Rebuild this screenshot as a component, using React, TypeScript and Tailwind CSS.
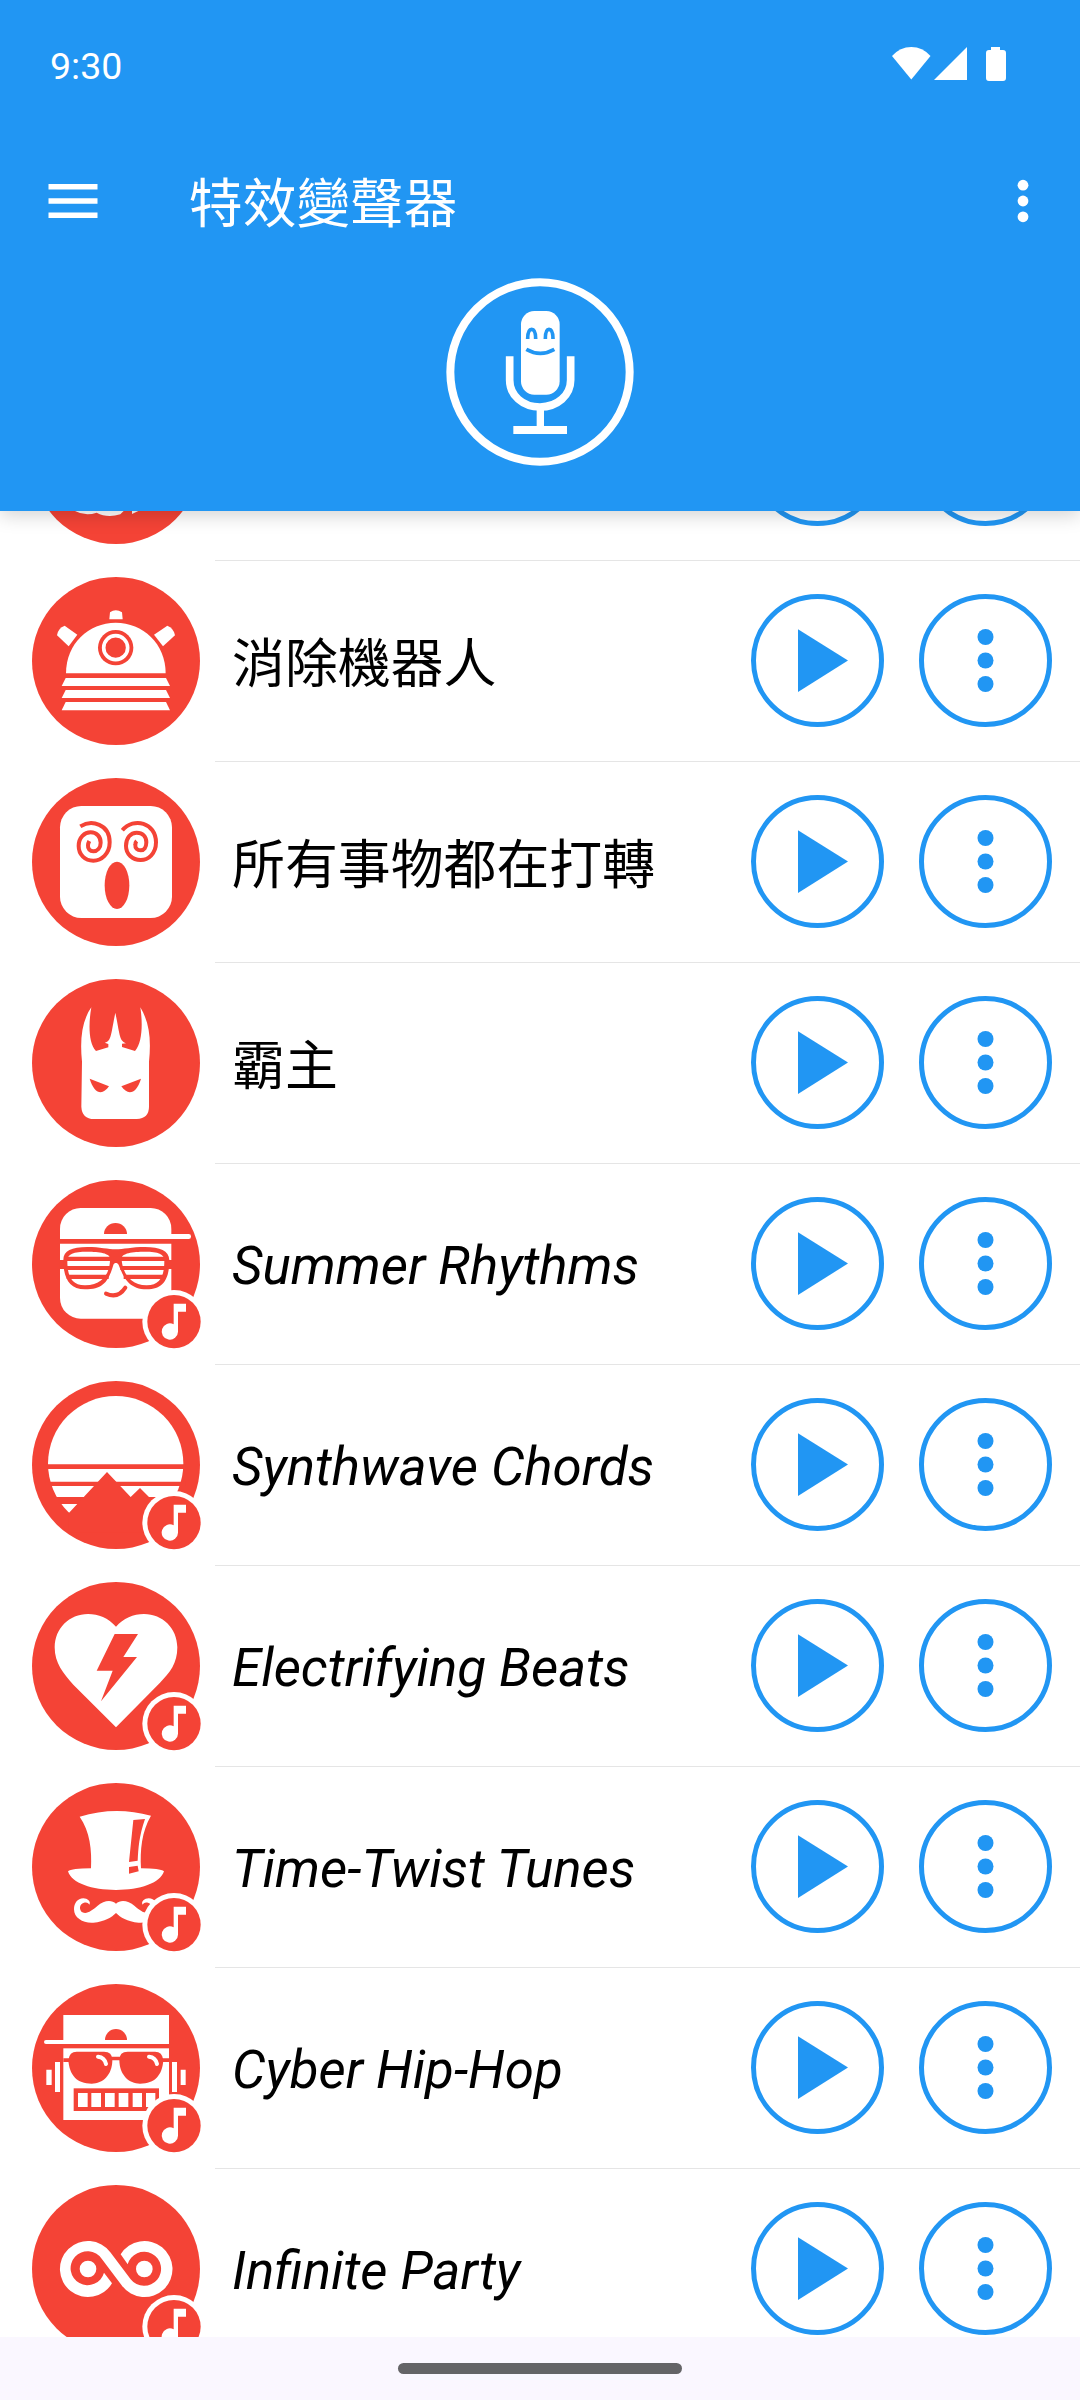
import type { ReactNode } from "react";

const RED = "#f44336";

type Effect = {
  id: string;
  label: string;
  art: ReactNode;
  music?: boolean;
};

// All effect drawings share a 504 x 504 canvas, the size of the red disc.
const effects: Effect[] = [
  {
    id: "cloud",
    label: "",
    art: (
      <>
        <path d="M129 405Q160 422 194 410Q225 427 265 415L276 404V300H129Z" />
        <path d="M300 403V414L323 403Z" />
      </>
    ),
  },
  {
    id: "exterminator",
    label: "消除機器人",
    art: (
      <>
        <path d="M232 127L234 106Q251 94 270 106L272 127Z" />
        <path d="M136 173L110 208L75 175Q78 153 98 146Z" />
        <path d="M366 173L393 208L429 175Q425 153 406 146Z" />
        <path d="M102 289C102 200 170 137 251 137C333 137 401 200 401 289Z" />
        <circle cx="251" cy="212" r="53" fill={RED} />
        <circle cx="251" cy="212" r="36" fill="none" stroke="#fff" strokeWidth="11" />
        <path d="M101 303H402L414 327H89Z" />
        <path d="M101 339H402L414 363H89Z" />
        <path d="M101 375H402L414 400H89Z" />
      </>
    ),
  },
  {
    id: "spinning",
    label: "所有事物都在打轉",
    art: (
      <>
        <rect x="84" y="84" width="336" height="336" rx="64" />
        <ellipse cx="255" cy="322" rx="37" ry="71" fill={RED} />
        <g fill="none" stroke={RED} strokeWidth="12">
          <path d="M145 145C179 124 233 138 233 193C233 228 208 248 184 248C159 248 140 230 140 204C140 178 158 163 176 163C194 163 206 176 206 194C206 210 196 220 184 220C174 220 167 212 168 202C168 196 170 193 172 189" />
          <path d="M271 157C305 116 372 134 372 193C372 228 348 246 326 246C301 246 282 228 282 204C282 180 296 164 314 164C332 164 343 176 343 193C343 208 336 217 326 217C316 217 309 210 310 201C310 196 311 192 314 189" />
        </g>
      </>
    ),
  },
  {
    id: "overlord",
    label: "霸主",
    art: (
      <>
        <path d="M178 85C150 125 143 180 150 248L148 383Q150 420 186 420H314Q351 418 351 383V248C358 180 352 130 325 85C332 130 332 190 309 216L270 204V194L282 193C262 185 264 170 250 101C236 170 238 187 218 191L229 195V205L192 216C168 190 170 130 178 85Z" />
        <path d="M173 299L231 322C212 350 187 346 173 299Z" fill={RED} />
        <path d="M327 299L268 322C287 350 313 346 327 299Z" fill={RED} />
      </>
    ),
  },
  {
    id: "summer",
    label: "Summer Rhythms",
    music: true,
    art: (
      <>
        <rect x="84" y="84" width="334" height="332" rx="62" />
        <rect x="300" y="162" width="177" height="15" rx="7" />
        <path d="M84 177H424V191H84Z" fill={RED} />
        <path d="M216 162A34.5 33 0 0 1 285 162Z" fill={RED} />
        <path d="M82 240H98V267H82ZM408 240H420V267H408Z" fill={RED} />
        <path d="M94 240C94 212 119 201 166 201C204 201 229 208 251 208C274 208 299 201 339 201C384 201 411 212 412 240C412 290 399 328 344 328C289 328 274 290 260 255C256 247 247 247 244 255C229 305 214 328 159 328C109 328 94 290 94 240Z" fill={RED} />
        <path d="M106 242C106 222 124 215 166 215C204 215 239 220 234 240C234 270 219 315 159 316C114 316 106 280 106 242Z" />
        <path d="M397 242C397 222 379 215 339 215C299 215 264 220 269 240C271 270 289 315 344 316C389 316 397 280 397 242Z" />
        <path d="M100 230H404V243H100ZM100 258H237V270H100ZM265 258H404V270H265ZM104 284H230V297H104ZM275 284H400V297H275Z" fill={RED} />
        <path d="M222 341C242 350 264 348 280 323" fill="none" stroke={RED} strokeWidth="12" strokeLinecap="round" />
      </>
    ),
  },
  {
    id: "synthwave",
    label: "Synthwave Chords",
    music: true,
    art: (
      <>
        <circle cx="251" cy="248" r="203" />
        <path d="M40 250H460V264H40ZM40 302H460V315H40ZM40 348H460V369H40Z" fill={RED} />
        <path d="M110 397L225 273L296 348L324 321L363 360L380 369H430V455H110Z" fill={RED} />
      </>
    ),
  },
  {
    id: "electrifying",
    label: "Electrifying Beats",
    music: true,
    art: (
      <>
        <path d="M252 134C229 108 199 96 168 96C112 96 68 139 68 196C68 244 94 274 124 308L252 436L384 302C414 272 436 244 436 196C436 139 392 96 336 96C304 96 274 109 252 134Z" />
        <path d="M248 156H318L274 225H315L207 358L242 266H194Z" fill={RED} />
      </>
    ),
  },
  {
    id: "time-twist",
    label: "Time-Twist Tunes",
    music: true,
    art: (
      <>
        <path d="M143 101Q249 68 357 98C329 146 324 201 327 256Q384 256 396 265C384 301 324 321 252 321C180 321 119 301 108 265Q119 256 177 256C180 201 174 146 143 101Z" />
        <path d="M304 111L339 108C321 160 319 195 317 233L291 237Z" fill={RED} />
        <path d="M291 252L317 248L320 265L291 272Z" fill={RED} />
        <path d="M252 362C239 349 216 351 196 369C179 383 166 394 151 388C141 381 141 363 156 359C166 357 170 361 172 365C178 356 166 346 154 346C136 346 126 361 126 379C126 406 154 421 184 419C219 416 239 403 252 390C265 403 285 416 320 419C350 421 378 406 378 379C378 361 368 346 350 346C338 346 326 356 332 365C334 361 338 357 348 359C363 363 363 381 353 388C338 394 325 383 308 369C288 351 265 349 252 362Z" />
      </>
    ),
  },
  {
    id: "cyber",
    label: "Cyber Hip-Hop",
    music: true,
    art: (
      <>
        <rect x="94" y="93" width="317" height="87" />
        <rect x="36" y="168" width="100" height="12" rx="6" />
        <path d="M219 168A33 33 0 0 1 285 168Z" fill={RED} />
        <rect x="94" y="193" width="317" height="215" />
        <path d="M94 223H116V234H94ZM385 223H411V234H385ZM232 218H272V229H232Z" fill={RED} />
        <path d="M109 228Q112 203 134 203H216Q241 203 241 228C241 273 212 299 179 299C134 299 112 273 109 228Z" fill={RED} />
        <path d="M262 228Q262 203 287 203H369Q391 203 394 228C391 273 369 299 324 299C291 299 262 273 262 228Z" fill={RED} />
        <path d="M198 218Q218 220 222 240M351 218Q371 220 375 240" fill="none" stroke="#fff" strokeWidth="12" strokeLinecap="round" />
        <path d="M43 257H59V303H43ZM69 234H84V324H69ZM420 234H435V324H420ZM446 257H461V303H446Z" />
        <rect x="125" y="313" width="256" height="68" fill={RED} />
        <path d="M138 327H167V369H138ZM178 327H207V369H178ZM219 327H248V369H219ZM260 327H289V369H260ZM302 327H330V369H302ZM342 327H370V369H342Z" />
      </>
    ),
  },
  {
    id: "infinite",
    label: "Infinite Party",
    music: true,
    art: (
      <>
        <path d="M240 295A84 84 0 1 1 235 201.6L296 282.6A51 51 0 1 0 287 238L266 208A84 84 0 1 1 270 302L209 221A51 51 0 1 0 216 263Z" />
        <circle cx="168" cy="252" r="25" />
        <circle cx="337" cy="252" r="25" />
      </>
    ),
  },
];

function MusicBadge() {
  return (
    <>
      <circle cx="426" cy="425" r="95" />
      <circle cx="426" cy="425" r="80" fill={RED} />
      <path d="M425 371H462V395H438V455A24.5 24.5 0 1 1 425 433Z" />
    </>
  );
}

function EffectRow({ label, art, music }: Effect) {
  return (
    <li className="flex h-[201px] shrink-0 pl-8">
      <svg viewBox="0 0 504 504" fill="#fff" className="mt-4 size-[168px] shrink-0 overflow-visible">
        <circle cx="252" cy="252" r="252" fill={RED} />
        {art}
        {music ? <MusicBadge /> : null}
      </svg>
      <div className="ml-[15px] flex flex-1 items-center border-b border-[#e5e5e5] pr-7 pl-[17px]">
        <span
          className={`flex-1 text-[52.9px] leading-[62px] whitespace-nowrap text-black ${
            music ? "pt-[3px] italic" : "pt-2"
          }`}
        >
          {label}
        </span>
        <button type="button" aria-label="Play" className="mr-[35px] mb-px size-[133px]">
          <svg viewBox="0 0 133 133" fill="#2196f3">
            <circle cx="66.5" cy="66.5" r="64" fill="none" stroke="#2196f3" strokeWidth="5" />
            <path d="M47 35.3L97 66.5L47 98Z" />
          </svg>
        </button>
        <button type="button" aria-label="More" className="mb-px size-[133px]">
          <svg viewBox="0 0 133 133" fill="#2196f3">
            <circle cx="66.5" cy="66.5" r="64" fill="none" stroke="#2196f3" strokeWidth="5" />
            <circle cx="66.5" cy="43" r="8" />
            <circle cx="66.5" cy="66.5" r="8" />
            <circle cx="66.5" cy="90" r="8" />
          </svg>
        </button>
      </div>
    </li>
  );
}

function StatusBar() {
  return (
    <div className="flex h-32 items-center justify-between pr-[74px] pl-[50px]">
      <span className="pt-1.5 text-[37.5px] leading-none">9:30</span>
      <svg viewBox="0 0 114 34" fill="currentColor" className="h-[34px] w-[114px]">
        <path d="M0 9Q8 0 19.300 0T38.500 9L19.300 32.500Z" />
        <path d="M75 0V33H42Z" />
        <path d="M99 0H108V3H111Q114 3 114 6V31Q114 34 111 34H97Q94 34 94 31V6Q94 3 97 3H99Z" />
      </svg>
    </div>
  );
}

function Toolbar() {
  return (
    <div className="flex h-[146px] items-center pr-[51.5px] pl-[48px]">
      <svg viewBox="0 0 50 34" fill="currentColor" className="h-[34px] w-[50px]">
        <path d="M0.500 0H49.500V5.500H0.500ZM0.500 14.200H49.500V19.700H0.500ZM0.500 28.400H49.500V34H0.500Z" />
      </svg>
      <h1 className="ml-[91px] flex-1 pt-2 text-[53.7px] leading-[62px]">特效變聲器</h1>
      <svg viewBox="0 0 12 44" fill="currentColor" className="h-11 w-3">
        <circle cx="6" cy="6.200" r="5.400" />
        <circle cx="6" cy="22" r="5.400" />
        <circle cx="6" cy="37.800" r="5.400" />
      </svg>
    </div>
  );
}

function MicButton() {
  return (
    <button type="button" aria-label="Record" className="mx-auto mt-1 size-[188px]">
      <svg viewBox="0 0 564 564" fill="#fff">
        <circle cx="282" cy="282" r="269" fill="none" stroke="#fff" strokeWidth="24" />
        <rect x="225" y="99" width="116" height="251" rx="40" />
        <g fill="none" stroke="#2196f3" strokeWidth="11">
          <path d="M245 183C245 163 250 154 257 154C264 154 269 163 269 183" />
          <path d="M298 183C298 163 302 154 309 154C316 154 321 163 321 183" />
          <path d="M241 214Q283 238 325 214" />
        </g>
        <path d="M191 235V306C191 352 230 387 282 387C334 387 374 352 374 306V235" fill="none" stroke="#fff" strokeWidth="23" />
        <path d="M272 396H294V444H363V468H202V444H272Z" />
      </svg>
    </button>
  );
}

export default function App() {
  return (
    <div className="flex h-[2400px] w-[1080px] flex-col overflow-hidden bg-white font-['Roboto','Noto_Sans_CJK_TC',sans-serif]">
      <header className="relative z-10 flex h-[511px] shrink-0 flex-col bg-[#2196f3] text-white shadow-[0_4px_18px_rgba(0,0,0,0.18)]">
        <StatusBar />
        <Toolbar />
        <MicButton />
      </header>

      {/* the list is scrolled, so its first row is mostly under the header */}
      <main className="min-h-0 flex-1 overflow-hidden">
        <ul className="-mt-[151px] flex flex-col">
          {effects.map((effect) => (
            <EffectRow key={effect.id} {...effect} />
          ))}
        </ul>
      </main>

      <footer className="flex h-[63px] shrink-0 items-center justify-center bg-[#faf7ff]">
        <div className="h-[11px] w-[284px] rounded-full bg-[#646467]" />
      </footer>
    </div>
  );
}
